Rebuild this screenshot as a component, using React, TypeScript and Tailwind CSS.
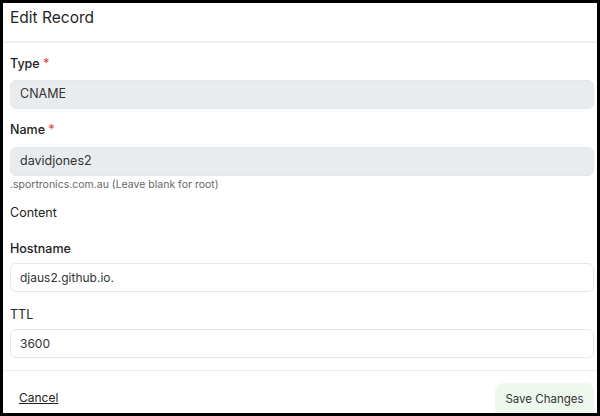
export default function App() {
  const font = { fontFamily: "Inter, 'Noto Sans', sans-serif" };
  return (
    <div
      style={font}
      className="w-[600px] h-[416px] border-[3px] border-black bg-white overflow-hidden text-[#222]"
    >
      <div className="h-[38px] pt-[5px] pl-[7px]">
        <h2 className="text-[15.5px] leading-[20px] text-[#1f1f1f]">Edit Record</h2>
      </div>
      <div className="h-[2px] bg-[#eef0f2]" />

      <div className="flex flex-col pl-[7px] pr-[3px]">
        <label className="mt-[12px] text-[12.5px] leading-[18px] font-medium">
          Type <span className="text-[#e5484d]">*</span>
        </label>
        <div className="mt-[7px] h-[29px] rounded-md bg-[#e9ecef] border border-[#e4e7eb] flex items-center px-[9px] text-[12.5px] text-[#333]">
          CNAME
        </div>

        <label className="mt-[12px] text-[12.5px] leading-[18px] font-medium">
          Name <span className="text-[#e5484d]">*</span>
        </label>
        <div className="mt-[8px] h-[29px] rounded-md bg-[#e9ecef] border border-[#e4e7eb] flex items-center px-[9px] text-[12.5px] text-[#333]">
          davidjones2
        </div>
        <p className="mt-[2px] text-[10.5px] leading-[14px] text-[#666]">
          .sportronics.com.au (Leave blank for root)
        </p>

        <p className="mt-[12px] text-[12.5px] leading-[18px]">Content</p>

        <label className="mt-[18px] text-[12.5px] leading-[18px] font-medium">Hostname</label>
        <div className="mt-[5px] h-[29px] rounded-md bg-white border border-[#e4e7eb] flex items-center px-[9px] text-[12px] text-[#333]">
          djaus2.github.io.
        </div>

        <label className="mt-[14px] text-[12.5px] leading-[18px]">TTL</label>
        <div className="mt-[5px] h-[29px] rounded-md bg-white border border-[#e4e7eb] flex items-center px-[9px] text-[12px] text-[#333]">
          3600
        </div>
      </div>

      <div className="mt-[12px] h-[1px] bg-[#e9ebee]" />

      <div className="flex items-start justify-between pl-[7px] pr-[3px] mt-[12px]">
        <button className="mt-[6px] ml-[9px] text-[12px] leading-[18px] underline text-[#222]">
          Cancel
        </button>
        <button className="h-[34px] w-[99px] rounded-lg bg-[#eef8ee] text-[11.5px] text-[#333]">
          Save Changes
        </button>
      </div>
    </div>
  );
}
